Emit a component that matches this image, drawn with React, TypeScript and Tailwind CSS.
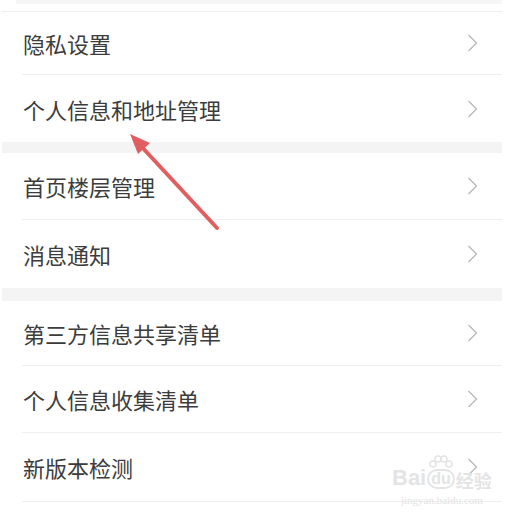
import { Fragment } from 'react';

const GROUPS: { label: string; h: number; line?: boolean }[][] = [
    [
        { label: '隐私设置', h: 63, line: true },
        { label: '个人信息和地址管理', h: 67 },
    ],
    [
        { label: '首页楼层管理', h: 67, line: true },
        { label: '消息通知', h: 68 },
    ],
    [
        { label: '第三方信息共享清单', h: 65, line: true },
        { label: '个人信息收集清单', h: 67, line: true },
        { label: '新版本检测', h: 69, line: true },
    ],
];

const BANDS = [11, 13];

function Chevron() {
    return (
        <svg width="11" height="18" viewBox="0 0 11 18" fill="none">
            <polyline points="1.5,1 9.5,9 1.5,17" stroke="#b8b8b8" strokeWidth="1.3" strokeLinejoin="miter" />
        </svg>
    );
}

export default function App() {
    return (
        <div className="relative w-[513px] h-[517px] bg-white overflow-hidden"
            style={{ fontFamily: '"Noto Sans CJK SC", "Noto Sans", sans-serif' }}>
            <div className="ml-[2px] w-[500px]">
                {/* top edge */}
                <div className="h-[12px] border-b border-[#efefef]">
                    <div className="h-[4px] ml-[14px] bg-[#f6f6f6]" />
                </div>

                {GROUPS.map((rows, gi) => (
                    <Fragment key={gi}>
                        {rows.map(r => (
                            <div key={r.label}
                                style={{ height: r.h }}
                                className={`ml-[20px] pr-[24px] flex items-center justify-between ${r.line ? 'border-b border-[#efefef]' : ''}`}>
                                <span className="pl-[1px] text-[22px] leading-none text-[#3c3c3c]">{r.label}</span>
                                <Chevron />
                            </div>
                        ))}
                        {gi < BANDS.length && <div style={{ height: BANDS[gi] }} className="bg-[#f4f4f4]" />}
                    </Fragment>
                ))}
            </div>

            {/* red annotation arrow */}
            <svg className="absolute left-0 top-0 pointer-events-none" width="513" height="517">
                <line x1="217" y1="228" x2="140" y2="145" stroke="#e25d5f" strokeWidth="4" strokeLinecap="round" />
                <polygon points="130,134 150,143 138,154" fill="#e25d5f" />
            </svg>

            {/* watermark */}
            <div className="absolute left-[392px] top-[467px] flex flex-col items-center text-[#e4e4e4] pointer-events-none">
                <div className="flex items-end leading-none">
                    <span className="text-[22px] font-bold" style={{ fontFamily: '"Liberation Sans", sans-serif' }}>Bai</span>
                    <span className="relative mx-[1px] flex flex-col items-center">
                        <svg width="26" height="14" viewBox="0 0 26 14" className="absolute -top-[14px]">
                            <circle cx="5" cy="9" r="3" fill="none" stroke="#e4e4e4" strokeWidth="1.5" />
                            <circle cx="10" cy="4" r="3" fill="none" stroke="#e4e4e4" strokeWidth="1.5" />
                            <circle cx="16" cy="4" r="3" fill="none" stroke="#e4e4e4" strokeWidth="1.5" />
                            <circle cx="21" cy="9" r="3" fill="none" stroke="#e4e4e4" strokeWidth="1.5" />
                        </svg>
                        <span className="text-[16px] font-bold border-2 border-[#e4e4e4] rounded-full px-[2px]" style={{ fontFamily: '"Liberation Sans", sans-serif' }}>du</span>
                    </span>
                    <span className="text-[18px] font-bold">经验</span>
                </div>
                <span className="text-[11px] mt-[3px]" style={{ fontFamily: '"Liberation Serif", serif' }}>jingyan.baidu.com</span>
            </div>
        </div>
    );
}
